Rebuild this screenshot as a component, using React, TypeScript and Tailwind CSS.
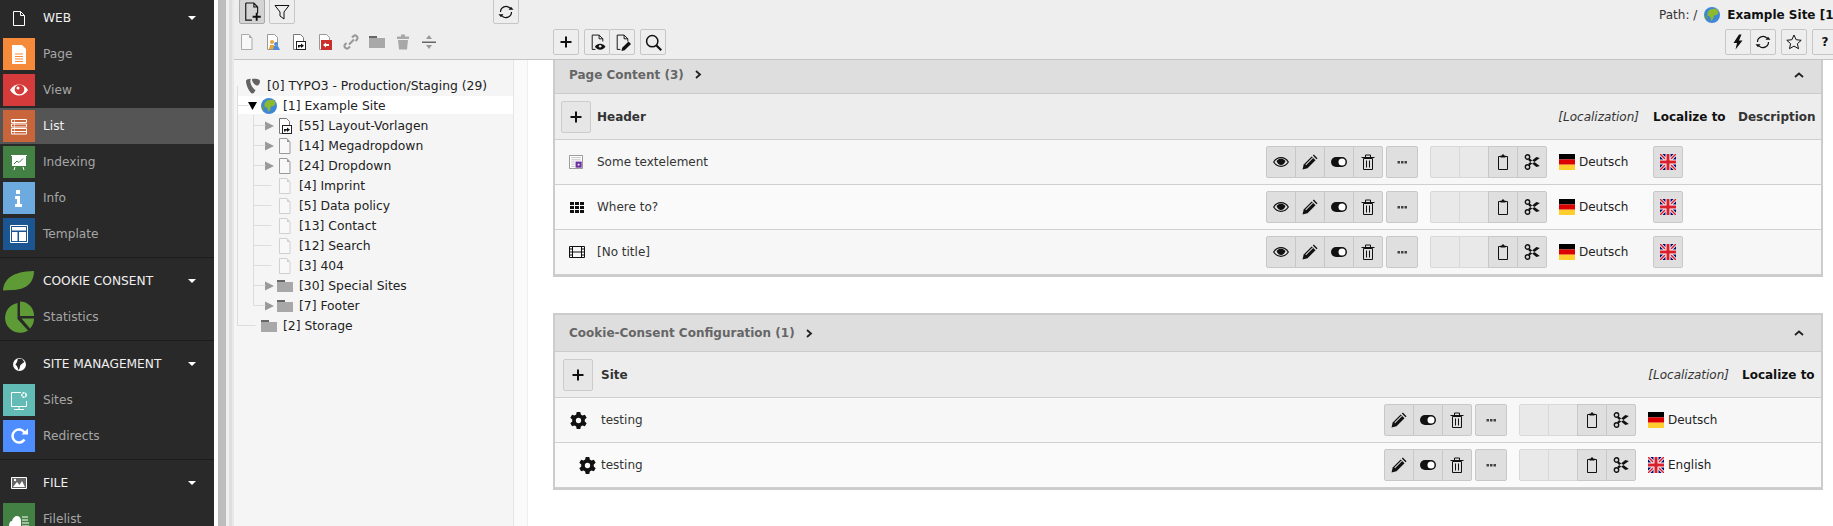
import type { ReactNode } from 'react'

const Svg = ({ size = 16, children }: { size?: number; children: ReactNode }) => (
  <svg width={size} height={size} viewBox="0 0 16 16" className="block shrink-0">
    {children}
  </svg>
)

const PageIcon = ({ stroke = '#999' }: { stroke?: string }) => (
  <Svg>
    <path d="M2.500 .5h7.500l3 3.500v11.500h-10.500z" fill="#f8f8f8" stroke={stroke} />
    <path d="M10 .5v3.500h3z" fill={stroke} />
  </Svg>
)

const ShortcutPage = () => (
  <Svg>
    <path d="M2.500 .5h7l3 3v12h-10z" fill="#fff" stroke="#777" />
    <rect x="5.500" y="7.500" width="9" height="8" fill="#fff" stroke="#222" />
    <path d="M7 13.500v-2.500h3v-1.500l3 2.300-3 2.300v-1.500h-1.500v1z" fill="#111" />
  </Svg>
)

const Folder = () => (
  <Svg>
    <path d="M0 2h8v2h8v10H0z" fill="#a8a8a8" />
    <path d="M0 2h8v2H0z" fill="#666" />
  </Svg>
)

const Globe = () => (
  <Svg>
    <circle cx="8" cy="8" r="8" fill="#3f86d6" />
    <path d="M6 2.500l6-1 2.500 3-1 3-3.500 1-1 3.500-2 2-.5-4-3-1.500v-3z" fill="#8dba2d" />
    <path d="M0.500 8l2 1 .5 3-1 .5z" fill="#6aa32b" />
  </Svg>
)

const Typo3Logo = () => (
  <Svg>
    <path d="M1 3C1 1.500 3.500 1 6 .8 5.500 1.200 5.300 2 5.300 3c0 3 2.700 8 5.200 9-1 2.500-2 3.500-3 3.500C4.500 15.500 1 7 1 3z" fill="#636363" />
    <path d="M7.500 .8C10 .5 15 1 15 3c0 2-1 4.500-2.500 4.500C10 7.500 7 4 7 2c0-.7.200-1 .5-1.200z" fill="#636363" />
  </Svg>
)

const Eye = () => (
  <Svg>
    <path d="M.7 8C2.500 5 5 3.700 8 3.700S13.500 5 15.300 8c-1.800 3-4.300 4.300-7.300 4.300S2.500 11 .7 8z" fill="none" stroke="#111" strokeWidth="1.200" />
    <path d="M3.500 7C5 5.300 6.400 4.800 8 4.800s3 .5 4.500 2.200C11.500 9.800 10 11 8 11S4.500 9.800 3.500 7z" fill="#111" />
  </Svg>
)

const Pencil = () => (
  <Svg>
    <path d="M.5 15.500l1.200-5 8-8 3.800 3.800-8 8z" fill="#111" />
    <path d="M10.800 1.500l1-1 3.700 3.700-1 1z" fill="#111" />
    <path d="M3.400 10.600l7-7 .6.6-7 7z" fill="#e0e0e0" />
  </Svg>
)

const Toggle = () => (
  <Svg>
    <rect y="3" width="16" height="10" rx="5" fill="#111" />
    <circle cx="11" cy="8" r="3.500" fill="#fff" />
  </Svg>
)

const Trash = () => (
  <Svg>
    <path d="M3.500 4.500h9v11h-9zM1.500 3.500h13M5.500 3.500v-2.500h5v2.500M6.500 6.500v7M9.500 6.500v7" fill="none" stroke="#111" />
  </Svg>
)

const Dots = () => (
  <Svg>
    <path d="M3.500 7h2.500v2.500H3.500zM7 7h2.500v2.500H7zM10.500 7H13v2.500h-2.500z" fill="#444" />
  </Svg>
)

const Clipboard = () => (
  <Svg>
    <path d="M3.500 2.500h9v13h-9z" fill="none" stroke="#111" />
    <path d="M5.500 1.500h1.500V.5h2v1h1.500v2h-5z" fill="#111" />
  </Svg>
)

const Scissors = () => (
  <Svg>
    <circle cx="3.500" cy="3" r="2.200" fill="none" stroke="#111" strokeWidth="1.400" />
    <circle cx="3.500" cy="13" r="2.200" fill="none" stroke="#111" strokeWidth="1.400" />
    <path d="M5 4l10.800 8-3.500 1L4.500 6.500zM5 12l10.800-8-3.500-1L4.500 9.500z" fill="#111" />
  </Svg>
)

const Plus = () => (
  <Svg>
    <path d="M7 2.500h2V7h4.500v2H9v4.500H7V9H2.500V7H7z" fill="#111" />
  </Svg>
)

const Refresh = () => (
  <Svg>
    <path d="M2.500 8a5.500 5.500 0 0 1 9.500-3.800M13.500 8A5.500 5.500 0 0 1 4 11.800" fill="none" stroke="#111" strokeWidth="1.200" />
    <path d="M10.500 5.800h5l-2.500-3zM5.500 10.200h-5l2.500 3z" fill="#111" />
  </Svg>
)

const Gear = () => (
  <Svg size={17}>
    <path
      fillRule="evenodd"
      d="M6.300 0h3.400l.5 2.300 1.500.9 2.300-.7 1.700 2.900-1.800 1.600v1.900l1.800 1.600-1.700 2.900-2.300-.7-1.500.9-.5 2.400H6.300l-.5-2.400-1.500-.9-2.300.7L.3 10.500l1.800-1.600V7L.3 5.400 2 2.500l2.300.7 1.500-.9zM8 5.500a2.500 2.500 0 1 0 0 5 2.500 2.500 0 0 0 0-5z"
      fill="#111"
    />
  </Svg>
)

const FlagDe = () => (
  <Svg>
    <rect width="16" height="5.400" fill="#000" />
    <rect y="5.400" width="16" height="5.300" fill="#dd0000" />
    <rect y="10.700" width="16" height="5.300" fill="#ffce2e" />
  </Svg>
)

const FlagUk = () => (
  <Svg>
    <rect width="16" height="16" fill="#000a6b" />
    <path d="M0 0l16 16M16 0L0 16" stroke="#fff" strokeWidth="3.200" />
    <path d="M0 0l16 16M16 0L0 16" stroke="#d8202c" strokeWidth="1.500" />
    <path d="M8 0v16M0 8h16" stroke="#fff" strokeWidth="5" />
    <path d="M8 0v16M0 8h16" stroke="#d8202c" strokeWidth="3" />
  </Svg>
)

const Caret = () => (
  <svg width="8" height="4" viewBox="0 0 8 4" className="ml-auto mr-[18px] shrink-0">
    <path d="M0 0h8L4 4z" fill="#fff" />
  </svg>
)

const Tile = ({ className, children }: { className: string; children?: ReactNode }) => (
  <div className={`ml-[3px] mr-2 flex h-8 w-8 shrink-0 items-center justify-center ${className}`}>{children}</div>
)

const ModuleItem = ({ label, tile, active, children }: { label: string; tile: string; active?: boolean; children?: ReactNode }) => (
  <div className={`flex h-9 items-center ${active ? 'bg-[#555555] text-[#f0f0f0]' : 'text-[#a6a6a6]'}`}>
    <Tile className={tile}>{children}</Tile>
    <span>{label}</span>
  </div>
)

const ModuleHead = ({ label, icon }: { label: string; icon: ReactNode }) => (
  <div className="flex h-9 items-center text-[#f0f0f0]">
    <div className="ml-[3px] mr-2 flex h-8 w-8 shrink-0 items-center justify-center">{icon}</div>
    <span>{label}</span>
    <Caret />
  </div>
)

const Sidebar = () => (
  <aside className="h-[526px] w-[214px] shrink-0 overflow-hidden bg-[#292929] text-[12.2px]">
    <section className="border-b border-[#1c1c1c] pb-[5px]">
      <ModuleHead
        label="WEB"
        icon={
          <Svg>
            <path d="M2.500 1.500h7l4 4v10h-11z" fill="none" stroke="#fff" />
            <path d="M9.500 1.500v4h4" fill="none" stroke="#fff" />
          </Svg>
        }
      />
      <ModuleItem label="Page" tile="bg-[#f58b3a]">
        <svg width="32" height="32" viewBox="0 0 32 32">
          <path d="M9 7h10l4 4v15H9z" fill="#fff" />
          <path d="M12 16h8M12 18.500h8M12 21h8M12 23.500h8" stroke="#f58b3a" />
        </svg>
      </ModuleItem>
      <ModuleItem label="View" tile="bg-[#d53b3b]">
        <svg width="32" height="32" viewBox="0 0 32 32">
          <path d="M7 16c2.500-3.700 5.500-5.500 9-5.500s6.500 1.800 9 5.500c-2.500 3.700-5.500 5.500-9 5.500S9.500 19.700 7 16z" fill="#fff" />
          <circle cx="16.500" cy="15.500" r="4.800" fill="#d53b3b" />
          <circle cx="15" cy="14" r="1.500" fill="#fff" />
        </svg>
      </ModuleItem>
      <ModuleItem label="List" tile="bg-[#c9653a]" active>
        <svg width="32" height="32" viewBox="0 0 32 32">
          <path d="M8.500 9.500h15v3h-15zM8.500 14h15v3h-15zM8.500 18.500h15v3h-15zM8.500 21.500h15v2.500h-15z" fill="none" stroke="#fff" />
          <path d="M11.500 9.500v14.500" stroke="#fff" strokeWidth=".6" />
        </svg>
      </ModuleItem>
      <ModuleItem label="Indexing" tile="bg-[#428043]">
        <svg width="32" height="32" viewBox="0 0 32 32">
          <path d="M8 9h16v1H8z" fill="#fff" />
          <path d="M9 10h14v10H9z" fill="#fff" />
          <path d="M11 18l3-3 2 1.500 4-4" fill="none" stroke="#428043" />
          <path d="M12 21l-1 3M20 21l1 3" stroke="#fff" />
        </svg>
      </ModuleItem>
      <ModuleItem label="Info" tile="bg-[#6daae0]">
        <svg width="32" height="32" viewBox="0 0 32 32">
          <path d="M13 8h4v4h-4zM12 14h5v8h2v3h-7v-3h2v-5h-2z" fill="#fff" />
        </svg>
      </ModuleItem>
      <ModuleItem label="Template" tile="bg-[#1b5592]">
        <svg width="32" height="32" viewBox="0 0 32 32">
          <path d="M7.500 7.500h17v17h-17z" fill="none" stroke="#fff" />
          <path d="M9 9h14v3.500H9zM9 14h5.500v9H9zM16 14h7v9h-7z" fill="#fff" />
        </svg>
      </ModuleItem>
    </section>
    <section className="border-b border-[#1c1c1c] pt-[5px] pb-[5px]">
      <ModuleHead
        label="COOKIE CONSENT"
        icon={
          <svg width="32" height="20" viewBox="0 0 32 20">
            <path d="M0 19.500C1 9 8 .5 31 0c0 10-6 19-22 19z" fill="#5e9b37" />
          </svg>
        }
      />
      <ModuleItem label="Statistics" tile="">
        <svg width="32" height="32" viewBox="0 0 32 32">
          <path d="M14.500 2v16l10.500 11.500A15 15 0 1 1 14.500 2z" fill="#5e9b37" />
          <path d="M17 .5a14 14 0 0 1 14 14.500H17z" fill="#5e9b37" />
          <path d="M18.500 17.500H31a14 14 0 0 1-4 10z" fill="#5e9b37" />
        </svg>
      </ModuleItem>
    </section>
    <section className="border-b border-[#1c1c1c] pt-[5px] pb-[5px]">
      <ModuleHead
        label="SITE MANAGEMENT"
        icon={
          <Svg size={13}>
            <circle cx="8" cy="8" r="8" fill="#fff" />
            <path d="M6 1l5 0 3 4-3 2-2 2-1 4-1 2-2-5-2-2 2-3z" fill="#292929" />
          </Svg>
        }
      />
      <ModuleItem label="Sites" tile="bg-[#62bbb5]">
        <svg width="32" height="32" viewBox="0 0 32 32">
          <path d="M18 8.500H8.500v14h15V17" fill="none" stroke="#fff" />
          <path d="M16 22.500v3M11 25.500h10" stroke="#fff" />
          <circle cx="21" cy="11" r="2.200" fill="none" stroke="#fff" strokeWidth="1.500" strokeDasharray="2 .6" />
        </svg>
      </ModuleItem>
      <ModuleItem label="Redirects" tile="bg-[#4d8dff]">
        <svg width="32" height="32" viewBox="0 0 32 32">
          <path d="M21.500 19.500a6.500 6.500 0 1 1 0-7" fill="none" stroke="#fff" strokeWidth="2.500" />
          <path d="M18.500 14.500h6.500V8.500z" fill="#fff" />
        </svg>
      </ModuleItem>
    </section>
    <section className="pt-[5px]">
      <ModuleHead
        label="FILE"
        icon={
          <Svg>
            <path d="M.5 2.500h15v11H.5z" fill="#666" stroke="#fff" />
            <path d="M2 12l4-5 2.500 3 2.500-4 3 6z" fill="#fff" />
            <circle cx="4" cy="5" r="1.200" fill="#fff" />
          </Svg>
        }
      />
      <ModuleItem label="Filelist" tile="bg-[#428043]">
        <svg width="32" height="32" viewBox="0 0 32 32">
          <path d="M6 23c0-3 1-5 3-5 .5-3 3-5 5-5 3 0 4 3 4 5v7H8c-1 0-2-1-2-2z" fill="#fff" />
          <path d="M19 14h6M19 17h6M19 20h7M19 23h7" stroke="#fff" />
        </svg>
      </ModuleItem>
    </section>
  </aside>
)

const TreeButton = ({ active, children }: { active?: boolean; children: ReactNode }) => (
  <div className={`flex h-[25px] w-[26px] items-center justify-center rounded-[2px] border ${active ? 'border-[#aaaaaa] bg-[#d4d4d4]' : 'border-[#c6c6c6] bg-[#eeeeee]'}`}>
    {children}
  </div>
)

const ToolSlot = ({ children }: { children: ReactNode }) => (
  <div className="flex h-4 w-[26px] shrink-0 items-center justify-center">{children}</div>
)

const TreeCaret = ({ open }: { open?: boolean }) =>
  open ? (
    <svg width="16" height="10" viewBox="0 0 16 10" className="shrink-0">
      <path d="M3 1h9L7.500 9z" fill="#000" />
    </svg>
  ) : (
    <svg width="16" height="10" viewBox="0 0 16 10" className="shrink-0">
      <path d="M4 .5l9 4.500-9 4.500z" fill="#999" />
    </svg>
  )

const TreeRow = ({ pad, caret, open, icon, label, hl }: { pad: string; caret?: boolean; open?: boolean; icon: ReactNode; label: string; hl?: boolean }) => (
  <div className={`flex h-5 items-center whitespace-nowrap ${pad} ${hl ? 'ml-[3px] border-b-2 border-[#f5f5f5] bg-white pt-[2px]' : ''}`}>
    {caret && <TreeCaret open={open} />}
    {icon}
    <span className="ml-[6px] text-[#222]">{label}</span>
  </div>
)

const PageTree = () => (
  <div className="relative w-[280px] shrink-0 border-r border-[#e6e6e6] bg-[#f5f5f5] pt-4 text-[12.35px]">
    {/* connector lines of the tree */}
    <svg width="280" height="300" className="pointer-events-none absolute top-0 left-0">
      <path d="M3.500 26v240M3.500 45.500h11M3.500 265.500h18M19.500 55v190M19.500 65.500h12M19.500 85.500h12M19.500 105.500h12M19.500 125.500h18M19.500 145.500h18M19.500 165.500h18M19.500 185.500h18M19.500 205.500h18M19.500 225.500h12M19.500 245.500h12" stroke="#dddddd" fill="none" />
    </svg>
    <TreeRow pad="pl-[11px]" icon={<Typo3Logo />} label="[0] TYPO3 - Production/Staging (29)" />
    <TreeRow pad="pl-[8px]" hl caret open icon={<Globe />} label="[1] Example Site" />
    <TreeRow pad="pl-[27px]" caret icon={<ShortcutPage />} label="[55] Layout-Vorlagen" />
    <TreeRow pad="pl-[27px]" caret icon={<PageIcon />} label="[14] Megadropdown" />
    <TreeRow pad="pl-[27px]" caret icon={<PageIcon />} label="[24] Dropdown" />
    <TreeRow pad="pl-[43px]" icon={<PageIcon stroke="#d0d0d0" />} label="[4] Imprint" />
    <TreeRow pad="pl-[43px]" icon={<PageIcon stroke="#d0d0d0" />} label="[5] Data policy" />
    <TreeRow pad="pl-[43px]" icon={<PageIcon stroke="#d0d0d0" />} label="[13] Contact" />
    <TreeRow pad="pl-[43px]" icon={<PageIcon stroke="#d0d0d0" />} label="[12] Search" />
    <TreeRow pad="pl-[43px]" icon={<PageIcon stroke="#d0d0d0" />} label="[3] 404" />
    <TreeRow pad="pl-[27px]" caret icon={<Folder />} label="[30] Special Sites" />
    <TreeRow pad="pl-[27px]" caret icon={<Folder />} label="[7] Footer" />
    <TreeRow pad="pl-[27px]" icon={<Folder />} label="[2] Storage" />
  </div>
)

const DocButton = ({ children }: { children: ReactNode }) => (
  <div className="flex h-[26px] w-[26px] items-center justify-center rounded-[2px] border border-[#c6c6c6] bg-[#eeeeee]">{children}</div>
)

const TopBar = () => (
  <header className="flex h-[60px] shrink-0 border-b border-[#c4c4c4] bg-[#eeeeee] text-xs">
    <div className="w-[319px] shrink-0">
      <div className="-mt-px flex pl-[5px]">
        <TreeButton active>
          <Svg size={20}>
            <path d="M3 .8h6.500L12.500 4v5M8 14.500H3V.8M9.500.8V4h3" fill="none" stroke="#111" strokeWidth=".9" />
            <path d="M11 8.500h1.500V11H15v1.500h-2.500V15H11v-2.500H8.500V11H11z" fill="#111" />
          </Svg>
        </TreeButton>
        <div className="ml-[4px]">
          <TreeButton>
            <Svg>
              <path d="M1 1.500h14l-5 6.500v7l-4-3V8z" fill="none" stroke="#111" />
            </Svg>
          </TreeButton>
        </div>
        <div className="ml-[198px]">
          <TreeButton>
            <Refresh />
          </TreeButton>
        </div>
      </div>
      <div className="mt-[10px] flex">
        <ToolSlot><PageIcon stroke="#aaa" /></ToolSlot>
        <ToolSlot>
          <Svg>
            <path d="M2.500 .5h7l3 3v12h-10z" fill="#fff" stroke="#999" />
            <circle cx="7" cy="8" r="2" fill="#e8a53a" />
            <path d="M4 15l1-4h4l1 4z" fill="#e8a53a" />
            <circle cx="11" cy="10" r="2" fill="#4d8dd8" />
            <path d="M8 16l1-4h4l2 4z" fill="#4d8dd8" />
          </Svg>
        </ToolSlot>
        <ToolSlot><ShortcutPage /></ToolSlot>
        <ToolSlot>
          <Svg>
            <path d="M2.500 .5h7l3 3v12h-10z" fill="#fff" stroke="#999" />
            <rect x="4" y="6" width="11" height="10" fill="#c9302c" />
            <path d="M12 10H9V8.500l-3 2.500 3 2.500V12h3z" fill="#fff" />
          </Svg>
        </ToolSlot>
        <ToolSlot>
          <Svg>
            <path d="M6 10.500l5-5M9 3.500l1.500-1.500a2.500 2.500 0 0 1 3.500 3.500L12.500 7M7 12.500L5.500 14A2.500 2.500 0 0 1 2 10.500L3.500 9" fill="none" stroke="#999" strokeWidth="2" />
          </Svg>
        </ToolSlot>
        <ToolSlot><Folder /></ToolSlot>
        <ToolSlot>
          <Svg>
            <path d="M2 2.500h12V5H2zM6 .5h4v2H6zM3 6h10l-1 9.500H4z" fill="#a8a8a8" />
          </Svg>
        </ToolSlot>
        <ToolSlot>
          <Svg>
            <path d="M1 7.500h14v1.500H1z" fill="#666" />
            <path d="M8 1l3 4H5zM8 15l-3-4h6z" fill="#999" />
          </Svg>
        </ToolSlot>
      </div>
    </div>
    <div className="min-w-0 flex-1 overflow-hidden">
      <div className="-mr-[6px] flex h-[29px] items-center justify-end whitespace-nowrap text-[#333]">
        <span>Path: /</span>
        <span className="mx-[7px]"><Globe /></span>
        <b className="font-bold text-[#111]">Example Site [1]</b>
      </div>
      <div className="flex justify-between">
        <div className="flex gap-[5px]">
          <DocButton><Plus /></DocButton>
          <div className="flex">
            <DocButton>
              <Svg size={17}>
                <path d="M6 14.500H3V1h6.500L13 4.500V7M9.500 1v3.500H13" fill="none" stroke="#111" strokeWidth=".9" />
                <path d="M5.500 12c1.500-2 3-2.800 5-2.800s3.500.8 5 2.800c-1.500 2-3 2.800-5 2.800s-3.500-.8-5-2.800z" fill="#111" />
                <circle cx="10.500" cy="11.500" r="1.200" fill="#eee" />
              </Svg>
            </DocButton>
            <div className="-ml-px">
              <DocButton>
                <Svg size={17}>
                  <path d="M6 14.500H3V1h6.500L13 4.500V7M9.500 1v3.500H13" fill="none" stroke="#111" strokeWidth=".9" />
                  <path d="M7 16l.7-3 6-6 2.300 2.300-6 6z" fill="#111" />
                </Svg>
              </DocButton>
            </div>
          </div>
          <DocButton>
            <Svg size={17}>
              <circle cx="6.800" cy="6.800" r="5.300" fill="none" stroke="#111" strokeWidth="1.400" />
              <path d="M10.800 10.800l4.500 4.500" stroke="#111" strokeWidth="2" />
            </Svg>
          </DocButton>
        </div>
        <div className="-mr-[5px] flex gap-[5px]">
          <div className="flex">
            <DocButton>
              <Svg>
                <path d="M9 .5L3.500 9h3.500L5.500 15.500 12.500 6.500H9L11.500 .5z" fill="#111" />
              </Svg>
            </DocButton>
            <div className="-ml-px">
              <DocButton><Refresh /></DocButton>
            </div>
          </div>
          <DocButton>
            <Svg>
              <path d="M8 1l2.100 4.700 5.100.6-3.800 3.400 1.100 5-4.500-2.600-4.500 2.600 1.100-5L.8 6.300l5.100-.6z" fill="none" stroke="#111" />
            </Svg>
          </DocButton>
          <DocButton><b className="text-xs font-bold text-[#111]">?</b></DocButton>
        </div>
      </div>
    </div>
  </header>
)

const Act = ({ off, children }: { off?: boolean; children?: ReactNode }) => (
  <div className={`-ml-px flex h-8 w-[30px] items-center justify-center border first:ml-0 first:rounded-l-[2px] last:rounded-r-[2px] ${off ? 'border-[#d8d8d8] bg-[#e9e9e9]' : 'border-[#c8c8c8] bg-[#dfdfdf]'}`}>
    {children}
  </div>
)

const Actions = ({ hasView }: { hasView?: boolean }) => (
  <>
    <div className="flex">
      {hasView && <Act><Eye /></Act>}
      <Act><Pencil /></Act>
      <Act><Toggle /></Act>
      <Act><Trash /></Act>
    </div>
    <div className="ml-[3px] flex h-8 w-8 items-center justify-center rounded-[2px] border border-[#c8c8c8] bg-[#dfdfdf]"><Dots /></div>
    <div className="ml-3 flex">
      <Act off />
      <Act off />
      <Act><Clipboard /></Act>
      <Act><Scissors /></Act>
    </div>
  </>
)

const Lang = ({ flag, label }: { flag: ReactNode; label: string }) => (
  <div className="ml-3 flex w-[94px] items-center gap-1 text-[#222]">
    {flag}
    <span>{label}</span>
  </div>
)

const PanelHead = ({ title, box }: { title: string; box: string }) => (
  <div className={`flex items-center border-b border-[#cccccc] bg-[#dedede] pl-[14px] pr-[17px] ${box}`}>
    <b className="font-bold text-[#666]">{title}</b>
    <svg width="7" height="9" viewBox="0 0 7 9" className="ml-[11px]">
      <path d="M1 1l4 3.500-4 3.500" fill="none" stroke="#222" strokeWidth="1.800" />
    </svg>
    <svg width="10" height="6" viewBox="0 0 10 6" className="ml-auto">
      <path d="M1 5l4-3.500L9 5" fill="none" stroke="#222" strokeWidth="1.800" />
    </svg>
  </div>
)

const AddButton = () => (
  <div className="flex h-8 w-[30px] items-center justify-center rounded-[2px] border border-[#cccccc] bg-[#e6e6e6]"><Plus /></div>
)

const Row = ({ striped, pad, title, icon, children }: { striped?: boolean; pad: string; title: string; icon: ReactNode; children: ReactNode }) => (
  <div className={`flex h-[45px] items-center border-b border-[#cfcfcf] ${striped ? 'bg-[#fafafa]' : 'bg-[#f7f7f7]'}`}>
    <div className={`flex w-0 flex-1 items-center ${pad}`}>
      {icon}
      <span className="text-[#333]">{title}</span>
    </div>
    {children}
  </div>
)

const ContentTiny = () => (
  <div className="w-4">
    <Svg size={14}>
      <path d="M.5 .5h15v15H.5z" fill="#fff" stroke="#888" />
      <path d="M2.500 3h11M2.500 5.500h11M2.500 8h4M2.500 10.500h4M2.500 13h4" stroke="#bbb" />
      <rect x="7.500" y="7.500" width="7" height="7" fill="#6b2fa0" />
      <rect x="10" y="10" width="2" height="2" fill="#fff" />
    </Svg>
  </div>
)

const ContentGrid = () => (
  <Svg>
    <path d="M1 3h4v3H1zM6 3h4v3H6zM11 3h4v3h-4zM1 7h4v3H1zM6 7h4v3H6zM11 7h4v3h-4zM1 11h4v3H1zM6 11h4v3H6zM11 11h4v3h-4z" fill="#111" />
  </Svg>
)

const ContentFilm = () => (
  <Svg>
    <path d="M.5 2.500h15v11H.5zM3.500 2.500v11M12.500 2.500v11M.5 5h3M.5 8h3M.5 11h3M12.500 5h3M12.500 8h3M12.500 11h3M3.500 8h9" fill="none" stroke="#111" />
  </Svg>
)

const PageContent = () => (
  <div className="w-[1270px] border-x-2 border-b-2 border-[#cccccc] text-xs">
    <PanelHead title="Page Content (3)" box="h-[34px] pb-1" />
    <div className="flex h-[46px] items-center border-b border-[#cfcfcf] bg-[#ededed] pl-[6px]">
      <AddButton />
      <b className="ml-[6px] flex-1 font-bold text-[#333]">Header</b>
      <i className="pr-[14px] text-[#333]">[Localization]</i>
      <b className="w-[85px] font-bold text-[#111]">Localize to</b>
      <b className="w-[83px] font-bold text-[#333]">Description</b>
    </div>
    {[
      { title: 'Some textelement', icon: <ContentTiny /> },
      { title: 'Where to?', icon: <ContentGrid /> },
      { title: '[No title]', icon: <ContentFilm /> },
    ].map((row, i) => (
      <Row key={row.title} striped={i === 1} pad="pl-[14px] gap-3" title={row.title} icon={row.icon}>
        <Actions hasView />
        <Lang flag={<FlagDe />} label="Deutsch" />
        <div className="flex h-8 w-[30px] items-center justify-center rounded-[2px] border border-[#c8c8c8] bg-[#dfdfdf]"><FlagUk /></div>
        <div className="w-[138px]" />
      </Row>
    ))}
  </div>
)

const CookieConfig = () => (
  <div className="mt-9 w-[1270px] border-2 border-[#cccccc] text-xs">
    <PanelHead title="Cookie-Consent Configuration (1)" box="h-[37px]" />
    <div className="flex h-[46px] items-center border-b border-[#cfcfcf] bg-[#ededed] pl-2">
      <AddButton />
      <b className="ml-2 flex-1 font-bold text-[#333]">Site</b>
      <i className="pr-[13px] text-[#333]">[Localization]</i>
      <b className="w-[79px] font-bold text-[#111]">Localize to</b>
    </div>
    <Row pad="pl-[15px] gap-[14px]" title="testing" icon={<Gear />}>
      <Actions />
      <Lang flag={<FlagDe />} label="Deutsch" />
      <div className="w-[79px]" />
    </Row>
    <Row striped pad="pl-[24px] gap-[5px]" title="testing" icon={<Gear />}>
      <Actions />
      <Lang flag={<FlagUk />} label="English" />
      <div className="w-[79px]" />
    </Row>
  </div>
)

export default function App() {
  return (
    <div className="flex h-[526px] w-[1833px] overflow-hidden bg-white font-['DejaVu_Sans',sans-serif]">
      <Sidebar />
      <div className="w-1 shrink-0 bg-white" />
      <div className="w-2 shrink-0 bg-[#bdbdbd]" />
      <div className="w-[3px] shrink-0 bg-[#efefef]" />
      <div className="w-[3px] shrink-0 bg-[#dedede]" />
      <div className="w-[2px] shrink-0 bg-[#e8e8e8]" />
      <main className="flex min-w-0 flex-1 flex-col">
        <TopBar />
        <div className="flex flex-1">
          <PageTree />
          <div className="w-[14px] shrink-0 border-r border-[#eeeeee] bg-[#fafafa]" />
          <div className="pl-[25px]">
            <PageContent />
            <CookieConfig />
          </div>
        </div>
      </main>
    </div>
  )
}
